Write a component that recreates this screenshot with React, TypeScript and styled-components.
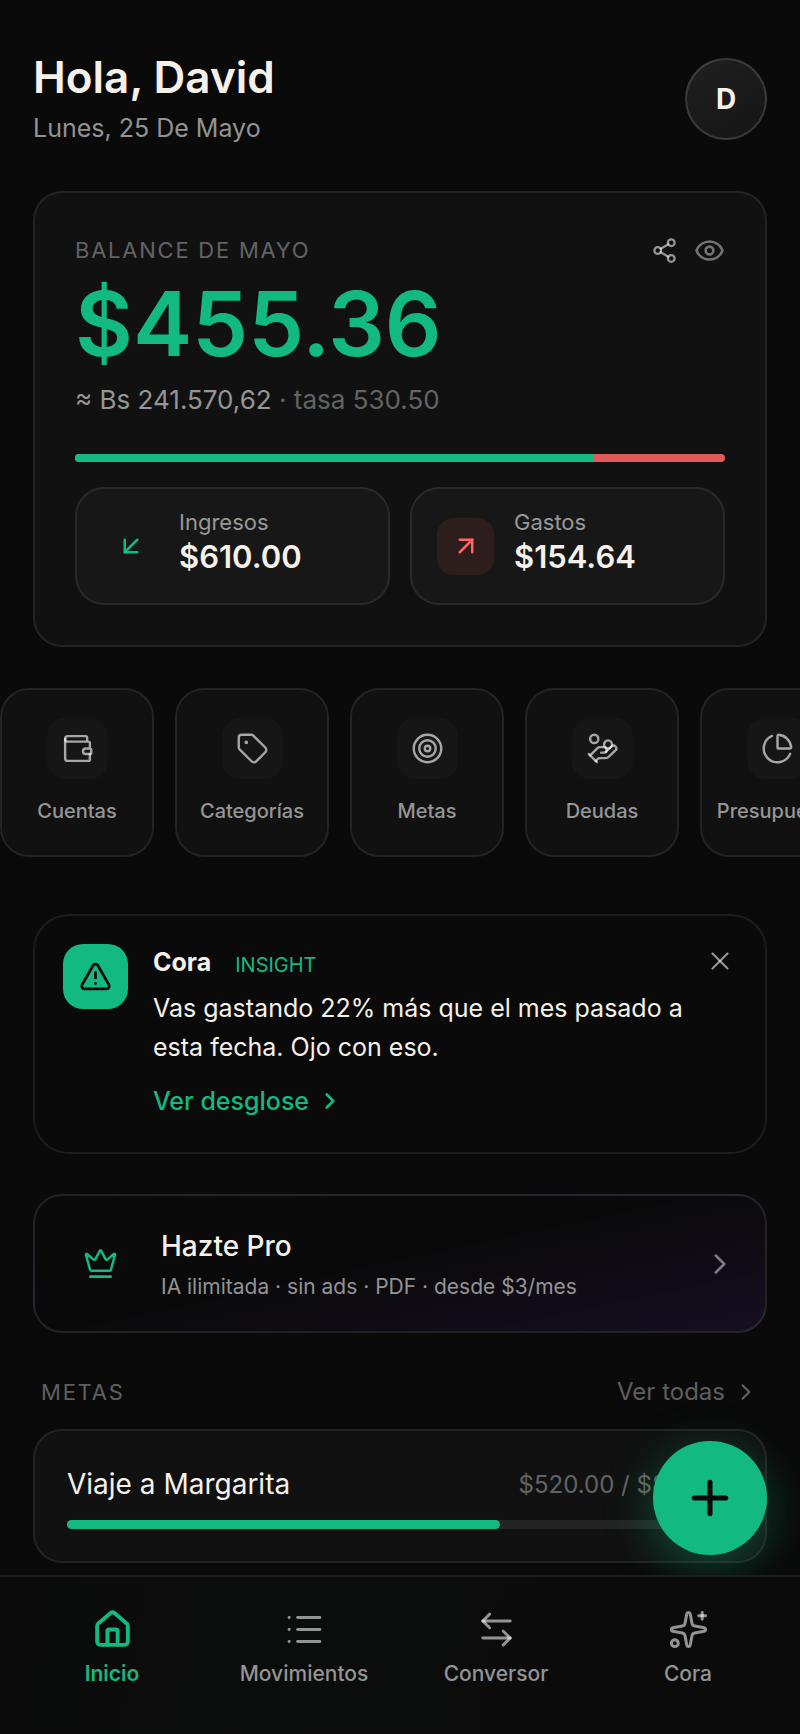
import React from "react";
import styled, { createGlobalStyle } from "styled-components";
import {
  ArrowDownLeft,
  ArrowLeftRight,
  ArrowUpRight,
  ChartPie,
  ChevronRight,
  Crown,
  Eye,
  HandCoins,
  House,
  List,
  Plus,
  Share2,
  Sparkles,
  Tag,
  Target,
  TriangleAlert,
  Wallet,
  X,
  type LucideIcon,
} from "lucide-react";

const color = {
  bg: "#0a0a0a",
  card: "#111111",
  raised: "#171717",
  line: "rgba(255, 255, 255, 0.08)",
  text: "#f5f1ea",
  muted: "rgba(255, 255, 255, 0.56)",
  faint: "rgba(255, 255, 255, 0.36)",
  green: "#12b981",
  red: "#e05a5c",
};

const GlobalStyle = createGlobalStyle`
  *, *::before, *::after { box-sizing: border-box; }
  body {
    margin: 0;
    background: ${color.bg};
    color: ${color.text};
    font-family: Inter, "Liberation Sans", sans-serif;
    -webkit-font-smoothing: antialiased;
  }
  button { font: inherit; color: inherit; background: none; border: 0; padding: 0; cursor: pointer; }
  a { color: inherit; text-decoration: none; }
  h1, h2, h3, p { margin: 0; padding: 0; font-weight: inherit; }
  svg { display: block; flex: none; }
`;

const Page = styled.main`
  min-height: 100vh;
  padding: 48px 0 168px;
`;

const Header = styled.header`
  display: flex;
  justify-content: space-between;
  align-items: center;
  margin: 0 33px 41px;
`;

const Greeting = styled.h1`
  font-size: 44px;
  line-height: 58px;
  font-weight: 600;
`;

const Today = styled.p`
  font-size: 25px;
  line-height: 44px;
  color: ${color.muted};
`;

const Avatar = styled.button`
  width: 82px;
  height: 82px;
  border-radius: 50%;
  border: 2px solid rgba(255, 255, 255, 0.14);
  background: linear-gradient(145deg, #202020, #151515);
  font-size: 28px;
  font-weight: 700;
`;

const Card = styled.section`
  margin: 0 33px;
  border: 2px solid ${color.line};
  border-radius: 29px;
  background: ${color.card};
`;

const BalanceCard = styled(Card)`
  padding: 40px;
  margin-bottom: 41px;
`;

const CardTop = styled.div`
  display: flex;
  justify-content: space-between;
  align-items: center;
  height: 34px;
`;

const Overline = styled.h2`
  font-size: 22px;
  line-height: 32px;
  letter-spacing: 0.08em;
  text-transform: uppercase;
  color: ${color.faint};
`;

const Actions = styled.div`
  display: flex;
  align-items: center;
  gap: 16px;
`;

const IconButton = styled.button<{ $tone?: string }>`
  display: grid;
  place-items: center;
  color: ${(p) => p.$tone ?? color.muted};
`;

const Amount = styled.p`
  font-size: 89px;
  line-height: 113px;
  font-weight: 600;
  color: ${color.green};
`;

const Converted = styled.p`
  font-size: 26px;
  line-height: 40px;
  color: ${color.muted};
`;

const Rate = styled.span`
  color: ${color.faint};
`;

const SplitBar = styled.div`
  display: flex;
  height: 8px;
  margin: 34px 0 25px;
  border-radius: 4px;
  overflow: hidden;
  background: ${color.red};
`;

const SplitFill = styled.div`
  background: ${color.green};
`;

const Flows = styled.div`
  display: grid;
  grid-template-columns: 1fr 1fr;
  gap: 20px;
`;

const Flow = styled.div`
  display: flex;
  align-items: center;
  gap: 20px;
  height: 118px;
  padding: 0 25px;
  border: 2px solid ${color.line};
  border-radius: 29px;
  background: ${color.raised};
`;

const FlowIcon = styled.span<{ $fg: string; $bg: string }>`
  display: grid;
  place-items: center;
  width: 57px;
  height: 57px;
  border-radius: 16px;
  color: ${(p) => p.$fg};
  background: ${(p) => p.$bg};
`;

const FlowText = styled.div`
  padding-bottom: 10px;
`;

const FlowLabel = styled.p`
  font-size: 22px;
  line-height: 32px;
  color: ${color.muted};
`;

const FlowValue = styled.p`
  font-size: 31px;
  line-height: 38px;
  font-weight: 600;
`;

const Shortcuts = styled.nav`
  display: flex;
  gap: 21px;
  margin-bottom: 57px;
  overflow-x: auto;
  scrollbar-width: none;
  &::-webkit-scrollbar { display: none; }
`;

const Shortcut = styled.a`
  flex: 0 0 154px;
  height: 169px;
  padding-top: 28px;
  border: 2px solid ${color.line};
  border-radius: 29px;
  background: ${color.card};
  display: flex;
  flex-direction: column;
  align-items: center;
  gap: 16px;
  font-size: 20px;
  line-height: 32px;
  font-weight: 500;
  color: ${color.muted};
`;

const ShortcutIcon = styled.span`
  display: grid;
  place-items: center;
  width: 61px;
  height: 61px;
  border-radius: 18px;
  background: #161616;
  color: rgba(255, 255, 255, 0.62);
`;

const InsightCard = styled(Card)`
  display: flex;
  align-items: flex-start;
  padding: 28px 28px 35px;
  margin-bottom: 40px;
  border-radius: 36px;
  background: ${color.bg};
`;

const InsightBadge = styled.span`
  display: grid;
  place-items: center;
  flex: none;
  width: 65px;
  height: 65px;
  margin-right: 25px;
  border-radius: 20px;
  background: ${color.green};
  color: ${color.bg};
`;

const InsightBody = styled.div`
  flex: 1;
`;

const InsightHead = styled.div`
  display: flex;
  align-items: flex-end;
  gap: 24px;
  margin-bottom: 9px;
`;

const InsightName = styled.h3`
  font-size: 25px;
  line-height: 36px;
  font-weight: 700;
`;

const InsightKind = styled.span`
  font-size: 20px;
  line-height: 30px;
  color: ${color.green};
`;

const InsightCopy = styled.p`
  font-size: 25px;
  line-height: 39px;
`;

const TextLink = styled.a<{ $quiet?: boolean }>`
  display: flex;
  width: fit-content;
  align-items: center;
  gap: 8px;
  font-size: ${(p) => (p.$quiet ? 24 : 25)}px;
  line-height: 32px;
  font-weight: ${(p) => (p.$quiet ? 400 : 500)};
  color: ${(p) => (p.$quiet ? color.faint : color.green)};
`;

const InsightLink = styled(TextLink)`
  margin-top: 18px;
`;

const CloseButton = styled(IconButton)`
  padding: 2px;
`;

const ProCard = styled.a`
  display: flex;
  align-items: center;
  gap: 28px;
  height: 139px;
  margin: 0 33px 41px;
  padding: 0 28px 0 32px;
  border: 2px solid rgba(255, 255, 255, 0.1);
  border-radius: 29px;
  background: linear-gradient(168deg, rgba(10, 10, 10, 0) 45%, rgba(24, 16, 38, 0.85) 100%);
`;

const ProIcon = styled.span`
  display: grid;
  place-items: center;
  width: 66px;
  height: 66px;
  color: ${color.green};
`;

const ProText = styled.div`
  flex: 1;
  padding-top: 6px;
`;

const ProTitle = styled.h3`
  font-size: 28px;
  line-height: 40px;
  font-weight: 500;
`;

const ProCopy = styled.p`
  font-size: 21px;
  line-height: 42px;
  color: ${color.muted};
`;

const SectionHead = styled.div`
  display: flex;
  justify-content: space-between;
  align-items: center;
  height: 35px;
  margin: 0 41px 20px;
`;

const GoalCard = styled(Card)`
  height: 134px;
  padding: 32px;
`;

const GoalRow = styled.div`
  display: flex;
  justify-content: space-between;
  align-items: center;
  height: 42px;
  margin-bottom: 15px;
`;

const GoalName = styled.h3`
  font-size: 28px;
`;

const GoalAmount = styled.p`
  font-size: 24px;
  color: ${color.faint};
`;

const Track = styled.div`
  height: 9px;
  border-radius: 5px;
  background: #242424;
`;

const TrackFill = styled.div`
  height: 100%;
  border-radius: inherit;
  background: ${color.green};
`;

const Fab = styled.button`
  position: fixed;
  right: 33px;
  bottom: 179px;
  display: grid;
  place-items: center;
  width: 114px;
  height: 114px;
  border-radius: 50%;
  background: ${color.green};
  color: ${color.bg};
  box-shadow: 0 12px 48px rgba(18, 185, 129, 0.35);
`;

const TabBar = styled.nav`
  position: fixed;
  left: 0;
  right: 0;
  bottom: 0;
  display: grid;
  grid-template-columns: repeat(4, 1fr);
  height: 159px;
  padding: 32px 16px 0;
  border-top: 2px solid #1d1d1d;
  background: linear-gradient(100deg, #0a0b0a, #0b0d0c 35%, #0b0b0b 70%);
`;

const Tab = styled.a<{ $active?: boolean }>`
  display: flex;
  flex-direction: column;
  align-items: center;
  gap: 8px;
  font-size: 21px;
  line-height: 32px;
  font-weight: ${(p) => (p.$active ? 600 : 500)};
  color: ${(p) => (p.$active ? color.green : color.muted)};
`;

const shortcuts: { label: string; Icon: LucideIcon }[] = [
  { label: "Cuentas", Icon: Wallet },
  { label: "Categorías", Icon: Tag },
  { label: "Metas", Icon: Target },
  { label: "Deudas", Icon: HandCoins },
  { label: "Presupuesto", Icon: ChartPie },
];

const tabs: { label: string; Icon: LucideIcon; active?: boolean }[] = [
  { label: "Inicio", Icon: House, active: true },
  { label: "Movimientos", Icon: List },
  { label: "Conversor", Icon: ArrowLeftRight },
  { label: "Cora", Icon: Sparkles },
];

const income = 610;
const spent = 154.64;
const goal = { name: "Viaje a Margarita", saved: 520, target: 800 };
const usd = (n: number) => `$${n.toFixed(2)}`;

export default function App() {
  return (
    <>
      <GlobalStyle />
      <Page>
        <Header>
          <div>
            <Greeting>Hola, David</Greeting>
            <Today>Lunes, 25 De Mayo</Today>
          </div>
          <Avatar aria-label="Perfil de David">D</Avatar>
        </Header>

        <BalanceCard>
          <CardTop>
            <Overline>Balance de mayo</Overline>
            <Actions>
              <IconButton aria-label="Compartir">
                <Share2 size={27} strokeWidth={2} />
              </IconButton>
              <IconButton aria-label="Ocultar montos" $tone="rgba(255, 255, 255, 0.42)">
                <Eye size={31} strokeWidth={2} />
              </IconButton>
            </Actions>
          </CardTop>
          <Amount>{usd(income - spent)}</Amount>
          <Converted>
            ≈ Bs 241.570,62 <Rate>· tasa 530.50</Rate>
          </Converted>
          <SplitBar>
            <SplitFill style={{ width: `${(income / (income + spent)) * 100}%` }} />
          </SplitBar>
          <Flows>
            <Flow>
              <FlowIcon $fg={color.green} $bg="transparent">
                <ArrowDownLeft size={30} />
              </FlowIcon>
              <FlowText>
                <FlowLabel>Ingresos</FlowLabel>
                <FlowValue>{usd(income)}</FlowValue>
              </FlowText>
            </Flow>
            <Flow>
              <FlowIcon $fg="#ff6467" $bg="#2e1d1d">
                <ArrowUpRight size={30} />
              </FlowIcon>
              <FlowText>
                <FlowLabel>Gastos</FlowLabel>
                <FlowValue>{usd(spent)}</FlowValue>
              </FlowText>
            </Flow>
          </Flows>
        </BalanceCard>

        <Shortcuts aria-label="Accesos rápidos">
          {shortcuts.map(({ label, Icon }) => (
            <Shortcut key={label} href="#">
              <ShortcutIcon>
                <Icon size={33} strokeWidth={1.75} />
              </ShortcutIcon>
              {label}
            </Shortcut>
          ))}
        </Shortcuts>

        <InsightCard>
          <InsightBadge>
            <TriangleAlert size={33} />
          </InsightBadge>
          <InsightBody>
            <InsightHead>
              <InsightName>Cora</InsightName>
              <InsightKind>INSIGHT</InsightKind>
            </InsightHead>
            <InsightCopy>Vas gastando 22% más que el mes pasado a esta fecha. Ojo con eso.</InsightCopy>
            <InsightLink href="#">
              Ver desglose
              <ChevronRight size={26} strokeWidth={2.5} />
            </InsightLink>
          </InsightBody>
          <CloseButton aria-label="Cerrar">
            <X size={30} strokeWidth={1.75} />
          </CloseButton>
        </InsightCard>

        <ProCard href="#">
          <ProIcon>
            <Crown size={35} strokeWidth={1.75} />
          </ProIcon>
          <ProText>
            <ProTitle>Hazte Pro</ProTitle>
            <ProCopy>IA ilimitada · sin ads · PDF · desde $3/mes</ProCopy>
          </ProText>
          <IconButton as="span" $tone="rgba(255, 255, 255, 0.46)">
            <ChevronRight size={34} strokeWidth={1.75} />
          </IconButton>
        </ProCard>

        <SectionHead>
          <Overline>Metas</Overline>
          <TextLink href="#" $quiet>
            Ver todas
            <ChevronRight size={26} strokeWidth={2} />
          </TextLink>
        </SectionHead>
        <GoalCard>
          <GoalRow>
            <GoalName>{goal.name}</GoalName>
            <GoalAmount>
              {usd(goal.saved)} / {usd(goal.target)}
            </GoalAmount>
          </GoalRow>
          <Track>
            <TrackFill style={{ width: `${(goal.saved / goal.target) * 100}%` }} />
          </Track>
        </GoalCard>
      </Page>

      <Fab aria-label="Agregar movimiento">
        <Plus size={54} strokeWidth={2.25} />
      </Fab>

      <TabBar aria-label="Principal">
        {tabs.map(({ label, Icon, active }) => (
          <Tab key={label} href="#" $active={active} aria-current={active ? "page" : undefined}>
            <Icon size={41} strokeWidth={active ? 2.25 : 1.75} />
            {label}
          </Tab>
        ))}
      </TabBar>
    </>
  );
}
